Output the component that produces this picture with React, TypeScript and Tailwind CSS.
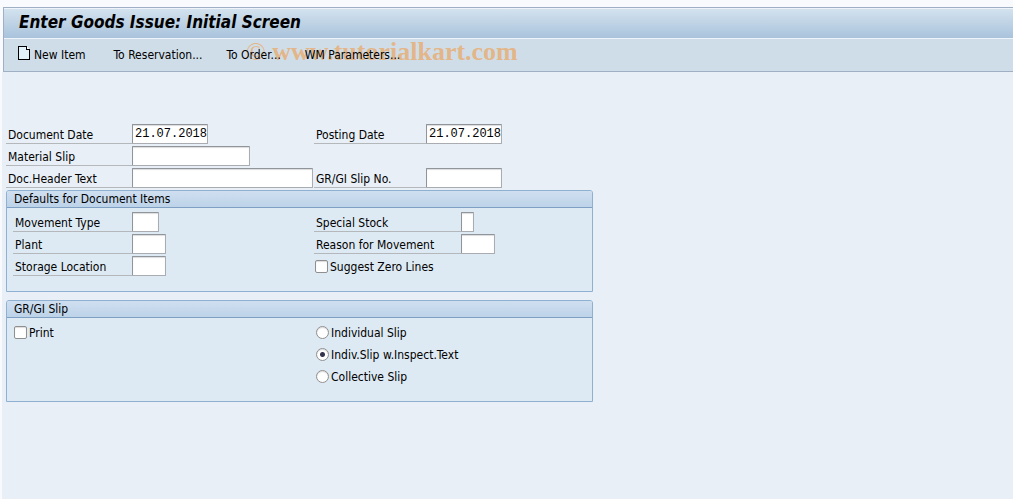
import { useState } from 'react';
import type { ReactNode } from 'react';
import { clsx } from 'clsx';

const LABEL = 'flex h-5 shrink-0 items-center border-b border-[#b4b8bb] pt-0.5 pl-0.5 whitespace-nowrap';
const FIELD =
  'h-5 min-w-0 rounded-[1px] border border-[#8f959b] border-r-[#a9adb1] border-b-[#a9adb1] bg-white pl-0.5 font-["Liberation_Mono",monospace] text-[12px] leading-4 text-black shadow-[inset_0_1px_1px_#dcdcdc] outline-none';
const TICK = 'size-[13px] shrink-0 appearance-none border border-[#8f8f8f] bg-white shadow-[inset_0_1px_1px_#dcdcdc]';

type FieldProps = { id: string; label: string; labelWidth: string; width: string; value?: string; maxLength?: number };

function Field({ id, label, labelWidth, width, value = '', maxLength }: FieldProps) {
  return (
    <div className="flex h-5">
      <label htmlFor={id} className={clsx(LABEL, labelWidth)}>{label}</label>
      <input id={id} type="text" defaultValue={value} maxLength={maxLength} className={clsx(FIELD, width)} />
    </div>
  );
}

function Check({ label }: { label: string }) {
  return (
    <label className="flex h-5 items-center gap-0.5 pt-px">
      <input type="checkbox" className={clsx(TICK, 'rounded-xs checked:bg-[#3a3a52]')} />
      {label}
    </label>
  );
}

function Group({ title, children }: { title: string; children: ReactNode }) {
  return (
    <section className="h-[102px] w-[587px] rounded-t-[3px] border border-[#8fb0d0] bg-[#deeaf3]">
      <h2 className="flex h-[17px] items-center rounded-t-xs border-b border-[#7f9fc3] bg-linear-to-b from-[#cfdff0] to-[#bdd3e8] pl-[7px]">
        {title}
      </h2>
      <div className="grid grid-cols-[301px_1fr] pt-1 pl-1.5">{children}</div>
    </section>
  );
}

function NewIcon() {
  return (
    <svg width="12" height="18" viewBox="0 0 12 18" shapeRendering="crispEdges" aria-hidden="true">
      <path d="M0.5 0.5H8.5L11.5 3.5V13.5H0.5Z" fill="#e2f2fa" stroke="#000" />
      <path d="M8.5 0.5V3.5H11.5" fill="#fff" stroke="#000" />
    </svg>
  );
}

const SLIPS = ['Individual Slip', 'Indiv.Slip w.Inspect.Text', 'Collective Slip'];

export default function App() {
  const [slip, setSlip] = useState(SLIPS[1]);

  return (
    <div className="min-h-screen bg-[#f8fafe] pt-[7px] pl-0.5 font-['DejaVu_Sans_Condensed','DejaVu_Sans',sans-serif] text-[12px] leading-4 text-black">
      <header className="relative isolate ml-px border-y border-l border-[#9fb0c4] bg-[#cfdde8]">
        <h1 className="flex h-[31px] items-center border-y border-[#eef4f9] bg-linear-to-b from-[#d3e2ee] to-[#a9c3dc] pb-1 pl-[15px] text-[17px] leading-5 font-bold whitespace-nowrap italic">
          Enter Goods Issue: Initial Screen
        </h1>
        <nav className="flex h-8 items-center gap-6 pl-3.5 whitespace-nowrap">
          <button type="button" className="flex items-center gap-1 pr-1"><NewIcon />New Item</button>
          <button type="button">To Reservation...</button>
          <button type="button">To Order...</button>
          <button type="button">WM Parameters...</button>
        </nav>
        <div className="pointer-events-none absolute top-7 left-[242px] -z-10 font-['Liberation_Serif',serif] text-[26px] leading-8 whitespace-nowrap text-[#f0a050]/65">
          © <b>www.tutorialkart.com</b>
        </div>
      </header>

      <main className="min-h-[427px] bg-[#e8eff6] pt-[52px] pl-1">
        <div className="grid grid-cols-[308px_1fr] gap-y-0.5 pb-0.5">
          <Field id="docDate" label="Document Date" labelWidth="w-[126px]" width="w-[76px]" value="21.07.2018" />
          <Field id="postDate" label="Posting Date" labelWidth="w-28" width="w-[76px]" value="21.07.2018" />
          <Field id="slip" label="Material Slip" labelWidth="w-[126px]" width="w-[118px]" />
          <div />
          <Field id="header" label="Doc.Header Text" labelWidth="w-[126px]" width="w-[181px]" />
          <Field id="slipNo" label="GR/GI Slip No." labelWidth="w-28" width="w-[76px]" />
        </div>

        <div className="flex flex-col gap-2">
          <Group title="Defaults for Document Items">
            <div className="flex flex-col gap-0.5">
              <Field id="mvt" label="Movement Type" labelWidth="w-[119px]" width="w-[27px]" maxLength={3} />
              <Field id="plant" label="Plant" labelWidth="w-[119px]" width="w-[34px]" maxLength={4} />
              <Field id="sloc" label="Storage Location" labelWidth="w-[119px]" width="w-[34px]" maxLength={4} />
            </div>
            <div className="flex flex-col gap-0.5">
              <Field id="special" label="Special Stock" labelWidth="w-[147px]" width="w-[13px]" maxLength={1} />
              <Field id="reason" label="Reason for Movement" labelWidth="w-[147px]" width="w-[34px]" maxLength={4} />
              <div className="pl-px"><Check label="Suggest Zero Lines" /></div>
            </div>
          </Group>

          <Group title="GR/GI Slip">
            <div className="pl-px"><Check label="Print" /></div>
            <div className="flex flex-col gap-0.5 pl-0.5" role="radiogroup" aria-label="GR/GI Slip">
              {SLIPS.map((s) => (
                <label key={s} className="flex h-5 items-center gap-0.5 pt-px">
                  <input
                    type="radio"
                    name="slipType"
                    checked={slip === s}
                    onChange={() => setSlip(s)}
                    className={clsx(TICK, 'rounded-full checked:bg-[radial-gradient(circle,#33334d_2px,#fff_3px)]')}
                  />
                  {s}
                </label>
              ))}
            </div>
          </Group>
        </div>
      </main>
    </div>
  );
}
